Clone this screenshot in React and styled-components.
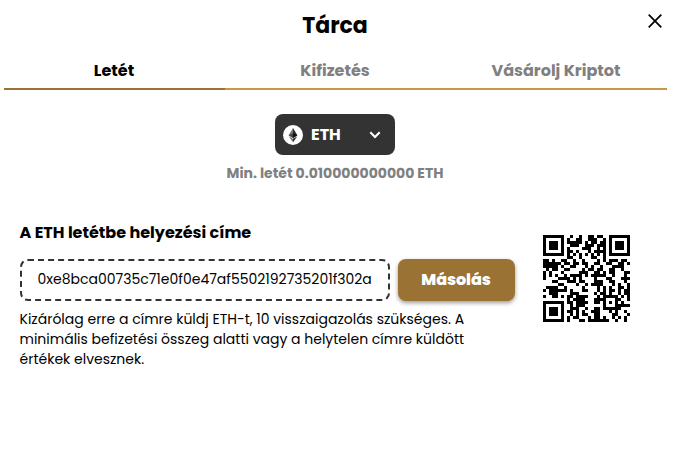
import React from "react";
import styled, { createGlobalStyle } from "styled-components";

const address = "0xe8bca00735c71e0f0e47af5502192735201f302a";

const tabs = [
  { label: "Letét", active: true },
  { label: "Kifizetés", active: false },
  { label: "Vásárolj Kriptot", active: false },
];

// QR code, version 3 / level L, byte mode, mask 7
const SIZE = 29;
const DATA_WORDS = 55;
const EC_WORDS = 15;
const MASK = 7;

const gfMul = (a, b) => {
  let z = 0;
  for (let i = 7; i >= 0; i--) {
    z = (z << 1) ^ ((z >>> 7) * 0x11d);
    z ^= ((b >>> i) & 1) * a;
  }
  return z;
};

const getCodewords = (text) => {
  let bits = "0100" + text.length.toString(2).padStart(8, "0");
  for (const c of text) bits += c.charCodeAt(0).toString(2).padStart(8, "0");
  bits += "0000";
  const data = bits.match(/.{8}/g).map((b) => parseInt(b, 2));
  for (let pad = 0xec; data.length < DATA_WORDS; pad ^= 0xec ^ 0x11) data.push(pad);

  const divisor = new Array(EC_WORDS).fill(0);
  divisor[EC_WORDS - 1] = 1;
  let root = 1;
  for (let i = 0; i < EC_WORDS; i++) {
    for (let j = 0; j < EC_WORDS; j++) {
      divisor[j] = gfMul(divisor[j], root);
      if (j + 1 < EC_WORDS) divisor[j] ^= divisor[j + 1];
    }
    root = gfMul(root, 2);
  }
  const ec = new Array(EC_WORDS).fill(0);
  data.forEach((b) => {
    const factor = b ^ ec.shift();
    ec.push(0);
    divisor.forEach((d, i) => (ec[i] ^= gfMul(d, factor)));
  });
  return data.concat(ec);
};

const buildQr = (text) => {
  const m = Array.from({ length: SIZE }, () => new Array(SIZE).fill(null));
  const set = (x, y, v) => {
    if (x >= 0 && y >= 0 && x < SIZE && y < SIZE) m[y][x] = v ? 1 : 0;
  };

  // timing, finder and alignment patterns
  for (let i = 0; i < SIZE; i++) {
    set(6, i, i % 2 === 0);
    set(i, 6, i % 2 === 0);
  }
  [[3, 3], [SIZE - 4, 3], [3, SIZE - 4]].forEach(([cx, cy]) => {
    for (let dy = -4; dy <= 4; dy++)
      for (let dx = -4; dx <= 4; dx++) {
        const d = Math.max(Math.abs(dx), Math.abs(dy));
        set(cx + dx, cy + dy, d !== 2 && d !== 4);
      }
  });
  for (let dy = -2; dy <= 2; dy++)
    for (let dx = -2; dx <= 2; dx++)
      set(22 + dx, 22 + dy, Math.max(Math.abs(dx), Math.abs(dy)) !== 1);

  // format bits
  const info = (1 << 3) | MASK;
  let rem = info;
  for (let i = 0; i < 10; i++) rem = (rem << 1) ^ ((rem >>> 9) * 0x537);
  const format = ((info << 10) | rem) ^ 0x5412;
  const bit = (i) => (format >>> i) & 1;
  for (let i = 0; i < 6; i++) set(8, i, bit(i));
  set(8, 7, bit(6));
  set(8, 8, bit(7));
  set(7, 8, bit(8));
  for (let i = 9; i < 15; i++) set(14 - i, 8, bit(i));
  for (let i = 0; i < 8; i++) set(SIZE - 1 - i, 8, bit(i));
  for (let i = 8; i < 15; i++) set(8, SIZE - 15 + i, bit(i));
  set(8, SIZE - 8, 1);

  const words = getCodewords(text);
  let n = 0;
  for (let right = SIZE - 1; right >= 1; right -= 2) {
    if (right === 6) right = 5;
    for (let v = 0; v < SIZE; v++) {
      for (let j = 0; j < 2; j++) {
        const x = right - j;
        const y = ((right + 1) & 2) === 0 ? SIZE - 1 - v : v;
        if (m[y][x] !== null) continue;
        const b = n < words.length * 8 ? (words[n >>> 3] >>> (7 - (n & 7))) & 1 : 0;
        n++;
        const flip = (((x + y) % 2) + ((x * y) % 3)) % 2 === 0;
        m[y][x] = flip ? b ^ 1 : b;
      }
    }
  }
  return m;
};

const QrCode = ({ value }) => {
  const path = buildQr(value)
    .map((row, y) => row.map((on, x) => (on ? `M${x} ${y}h1v1h-1z` : "")).join(""))
    .join("");
  return (
    <svg width="87" height="87" viewBox="0 0 29 29" shapeRendering="crispEdges">
      <path d={path} fill="#000" />
    </svg>
  );
};

const App = () => {
  return (
    <>
      <GlobalStyle />
      <WalletWrapper>
        <Header>
          <Title>Tárca</Title>
          <CloseButton>
            <svg width="14" height="14" viewBox="0 0 14 14">
              <path d="M0.7 0.7L13.3 13.3M13.3 0.7L0.7 13.3" stroke="#000" strokeWidth="1.7" />
            </svg>
          </CloseButton>
        </Header>

        <Tabs>
          {tabs.map((tab) => (
            <Tab key={tab.label} $active={tab.active}>
              {tab.label}
            </Tab>
          ))}
        </Tabs>

        <CurrencySection>
          <CurrencySelect>
            <svg width="20" height="20" viewBox="0 0 20 20">
              <circle cx="10" cy="10" r="10" fill="#fff" />
              <path d="M10 3L5.6 10.3L10 12.9z" fill="#777" />
              <path d="M10 3L14.4 10.3L10 12.9z" fill="#2b2b2b" />
              <path d="M5.6 10.3L10 8.3V12.9z" fill="#444" />
              <path d="M14.4 10.3L10 8.3V12.9z" fill="#111" />
              <path d="M5.6 11.2L10 13.8V17.2z" fill="#777" />
              <path d="M14.4 11.2L10 13.8V17.2z" fill="#2b2b2b" />
            </svg>
            <span>ETH</span>
            <svg width="12" height="8" viewBox="0 0 12 8">
              <path
                d="M1.3 1.3L6 6L10.7 1.3"
                fill="none"
                stroke="#fff"
                strokeWidth="2.1"
              />
            </svg>
          </CurrencySelect>
          <MinDeposit>Min. letét 0.010000000000 ETH</MinDeposit>
        </CurrencySection>

        <Deposit>
          <DepositInfo>
            <Heading>A ETH letétbe helyezési címe</Heading>
            <AddressRow>
              <AddressBox>{address}</AddressBox>
              <CopyButton>Másolás</CopyButton>
            </AddressRow>
            <Note>
              <NoteLine>Kizárólag erre a címre küldj ETH-t, 10 visszaigazolás szükséges. A</NoteLine>
              <NoteLine>minimális befizetési összeg alatti vagy a helytelen címre küldött</NoteLine>
              <NoteLine>értékek elvesznek.</NoteLine>
            </Note>
          </DepositInfo>
          <QrWrapper>
            <QrCode value={address} />
          </QrWrapper>
        </Deposit>
      </WalletWrapper>
    </>
  );
};

export default App;

const GlobalStyle = createGlobalStyle`
  * {
    box-sizing: border-box;
  }
  body {
    margin: 0;
    background-color: #fff;
    color: #000;
    font-family: Poppins, Inter, sans-serif;
  }
  button {
    font-family: inherit;
    border: none;
    padding: 0;
    cursor: pointer;
  }
  svg {
    display: block;
  }
`;

const WalletWrapper = styled.div`
  width: 677px;
  height: 467px;
  padding: 0 10px 0 4px;
  overflow: hidden;
`;

const Header = styled.div`
  display: grid;
  grid-template-columns: 1fr auto 1fr;
  height: 50px;
`;

const Title = styled.h1`
  grid-column: 2;
  margin: 0;
  padding-right: 1px;
  font-size: 22px;
  font-weight: 700;
  line-height: 52px;
`;

const CloseButton = styled.button`
  justify-self: end;
  align-self: start;
  margin: 14px 5px 0 0;
  background: transparent;
`;

const Tabs = styled.div`
  display: grid;
  grid-template-columns: repeat(3, 1fr);
  height: 40px;
`;

const Tab = styled.div`
  padding: 4px 1px 0 0;
  border-bottom: 2px solid ${({ $active }) => ($active ? "#9a7334" : "#c7974b")};
  color: ${({ $active }) => ($active ? "#000" : "#808080")};
  font-size: 16px;
  font-weight: 700;
  line-height: 34px;
  text-align: center;
`;

const CurrencySection = styled.div`
  display: flex;
  flex-direction: column;
  align-items: center;
  padding: 24px 1px 0 0;
`;

const CurrencySelect = styled.button`
  display: flex;
  align-items: center;
  width: 120px;
  height: 41px;
  padding: 0 14px 0 8px;
  border-radius: 8px;
  background-color: #333;
  color: #fff;

  span {
    flex: 1;
    padding-left: 8px;
    font-size: 16px;
    font-weight: 700;
    text-align: left;
  }
`;

const MinDeposit = styled.p`
  margin: 8px 0 0;
  color: #808080;
  font-size: 14px;
  font-weight: 700;
  line-height: 20px;
  white-space: nowrap;
`;

const Deposit = styled.div`
  display: flex;
  justify-content: space-between;
  padding: 38px 37px 0 15.5px;
`;

const DepositInfo = styled.div`
  width: 496px;
`;

const Heading = styled.h2`
  margin: 0 0 14px;
  font-size: 16px;
  font-weight: 700;
  line-height: 24px;
  white-space: nowrap;
`;

const AddressRow = styled.div`
  display: flex;
  gap: 8px;
`;

const AddressBox = styled.div`
  width: 370px;
  height: 42px;
  padding: 0 16px;
  border: 2px dashed #333;
  border-radius: 8px;
  font-size: 14px;
  line-height: 37px;
  white-space: nowrap;
`;

const CopyButton = styled.button`
  width: 117px;
  height: 42px;
  padding-bottom: 2px;
  border-radius: 8px;
  background-color: #9a7334;
  box-shadow: 0 2px 4px rgba(0, 0, 0, 0.4);
  color: #fff;
  font-size: 16px;
  font-weight: 800;
  letter-spacing: -0.1px;
`;

const Note = styled.div`
  padding-top: 8px;
`;

const NoteLine = styled.p`
  margin: 0;
  font-size: 14px;
  line-height: 20px;
  white-space: nowrap;
`;

const QrWrapper = styled.div`
  padding-top: 14px;
`;
